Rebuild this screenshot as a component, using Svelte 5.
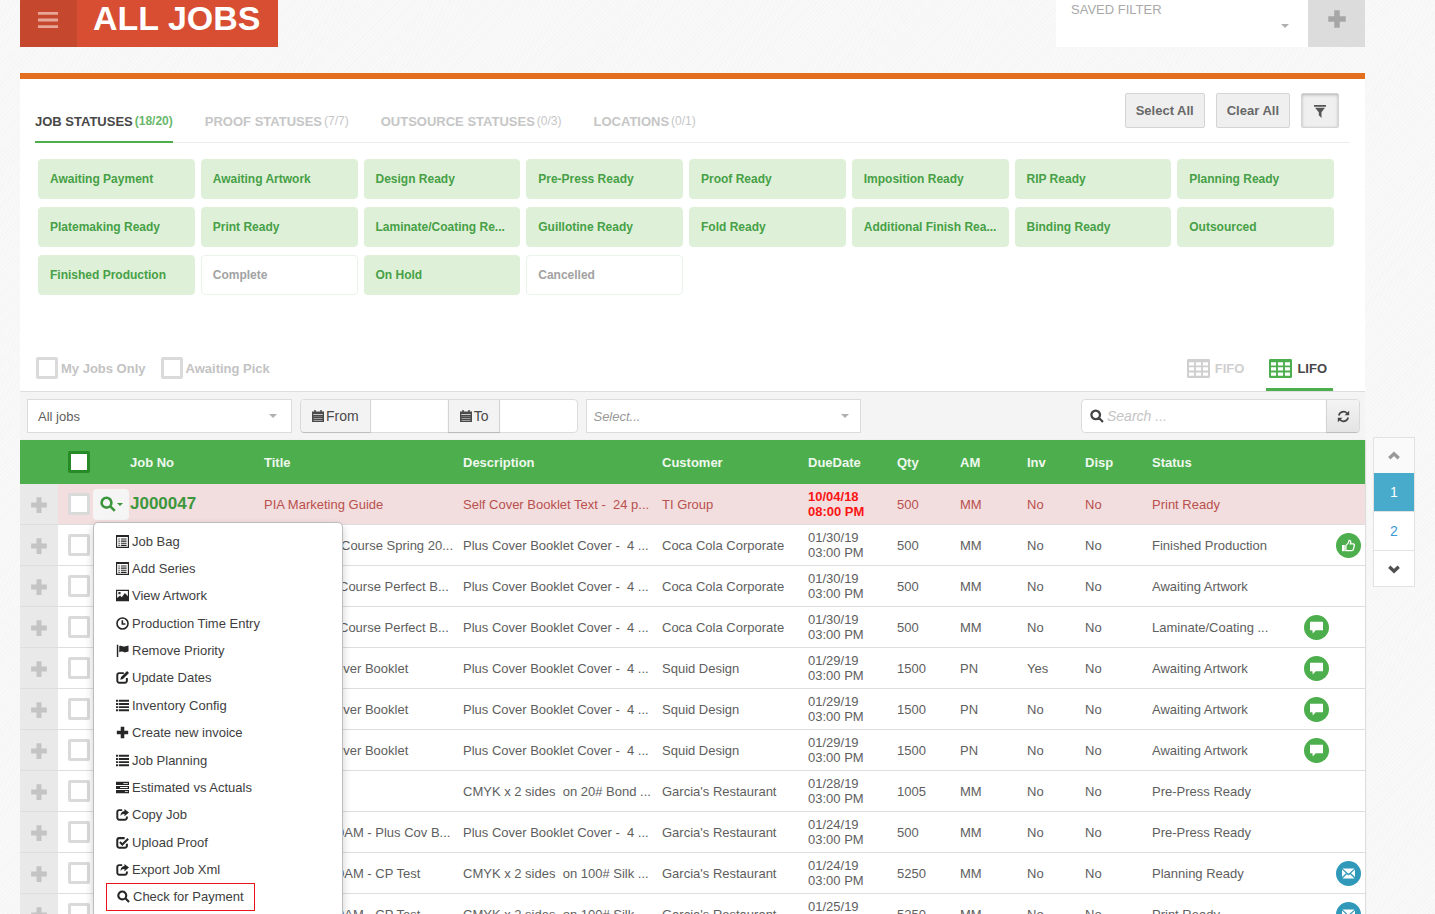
<script>
  const icons = {
    menu: { d: 'M0 0h16v2.8H0zM0 6.6h16v2.8H0zM0 13.2h16v2.8H0z' },
    plus: { d: 'M5.8 1h4.4v4.8H15v4.4h-4.8V15H5.8v-4.8H1V5.8h4.8z' },
    filter: { d: 'M0 0h16v2.2H0zM1.4 3.4h13.2L10 9v7L6.4 12.6V9z' },
    calendar: {
      d: 'M3 0h2v2h6V0h2v2h3v14H0V2h3zM1.6 5.4v.8h12.8v-.8zM2 8.2v.6h12v-.6zM2 10.8v.6h12v-.6zM2 13.4v.6h12v-.6z',
    },
    search: { s: 'M11.4 6.7a4.9 4.9 0 1 1-9.8 0a4.9 4.9 0 1 1 9.8 0zM10.3 10.3L14.8 14.8', w: 2.6 },
    refresh: {
      d: 'M15 1v5.6H9.4zM1 15V9.4h5.6z',
      s: 'M2.2 6.8A6 6 0 0 1 12.6 4.2M13.8 9.2A6 6 0 0 1 3.4 11.8',
      w: 2,
    },
    table: {
      d: 'M1 0H15q1 0 1 1V15q0 1-1 1H1q-1 0-1-1V1Q0 0 1 0zM1.4 2.8v2.6h3.5V2.8zM6.2 2.8v2.6h3.6V2.8zM11.1 2.8v2.6h3.5V2.8zM1.4 6.9v2.8h3.5V6.9zM6.2 6.9v2.8h3.6V6.9zM11.1 6.9v2.8h3.5V6.9zM1.4 11.3v2.9h3.5v-2.9zM6.2 11.3v2.9h3.6v-2.9zM11.1 11.3v2.9h3.5v-2.9z',
    },
    listAlt: {
      d: 'M0 0H16V16H0zM1.4 2.6V14.6H14.6V2.6zM3 4.2h1.6v1.4H3zM6 4.2h7v1.4H6zM3 6.8h1.6v1.4H3zM6 6.8h7v1.4H6zM3 9.4h1.6v1.4H3zM6 9.4h7v1.4H6zM3 12h1.6v1.4H3zM6 12h7v1.4H6z',
    },
    picture: { d: 'M0 1H16V15H0zM1.4 2.4V11L5 8l2 2 4-5.2L14.6 9V2.4zM3 3.8h2.6v2.6H3z' },
    clock: { s: 'M14.8 8a6.8 6.8 0 1 1-13.6 0a6.8 6.8 0 1 1 13.6 0zM7.8 4V8.6H11.6', w: 2 },
    flag: {
      d: 'M1 1h1.8v15H1zM4 2.6c2.4-1.6 4.4.8 6.8.4 1.6-.2 3-.8 4.6-1.2v7.4c-3 1.2-4.4 1.2-6.2.6-2-.8-3.4-.6-5.2.4z',
    },
    edit: { d: 'M13.6 0l2.4 2.4-7.4 7.4-3.4 1 1-3.4z', s: 'M9.6 2.6H4A2.4 2.4 0 0 0 1.6 5v7A2.4 2.4 0 0 0 4 14.4h7A2.4 2.4 0 0 0 13.4 12V8.6', w: 2.4 },
    list: {
      d: 'M0 1h2.4v2.4H0zM3.4 1H16v2.4H3.4zM0 4.9h2.4v2.4H0zM3.4 4.9H16v2.4H3.4zM0 8.8h2.4v2.4H0zM3.4 8.8H16v2.4H3.4zM0 12.7h2.4v2.4H0zM3.4 12.7H16v2.4H3.4z',
    },
    tasks: {
      d: 'M0 1h16v3.8H0zM9 2.4v1h5.6v-1zM0 6.1h16v3.8H0zM5 7.5v1h9.6v-1zM0 11.2h16V15H0zM11 12.6v1h3.6v-1z',
    },
    share: {
      d: 'M10.4 1.2L16 5.6 10.4 10V7.4C8 7.2 6.6 8.2 5.6 10.2 5.4 6.4 7.4 4 10.4 3.8z',
      s: 'M7.6 2.6H4A2.4 2.4 0 0 0 1.6 5v7A2.4 2.4 0 0 0 4 14.4h7A2.4 2.4 0 0 0 13.4 12v-1.6',
      w: 2.4,
    },
    check: {
      s: 'M10.6 2.6H4A2.4 2.4 0 0 0 1.6 5v7A2.4 2.4 0 0 0 4 14.4h7A2.4 2.4 0 0 0 13.4 12V9.4M4.8 7.4l3 3L15 3.4',
      w: 2.5,
    },
    up: { s: 'M2.6 10.6L8 5.4l5.4 5.2', w: 3.8 },
    down: { s: 'M2.6 5.4L8 10.6l5.4-5.2', w: 3.8 },
    thumb: {
      d: 'M0 7.4h3.4V15H0z',
      s: 'M4.8 8C7 6.4 8.6 4.8 8.8 1.6c2.2-.2 2.4 2 1.4 4.4h3.8q1.4.2 1.2 1.8l-1.2 5q-.4 1.4-1.8 1.4H4.8z',
      w: 1.6,
    },
    comment: { d: 'M0 1h16v10.4H7L3.4 15.4 3 11.4H0z' },
    mail: {
      d: 'M.6 1.8H15.4L8 8.4zM0 3.2L4.9 7.6 0 12.2zM16 3.2V12.2L11.1 7.6zM.6 14.2L6 8.8 8 10.4 10 8.8 15.4 14.2z',
    },
  };

  const tabs = [
    { name: 'JOB STATUSES', count: '(18/20)' },
    { name: 'PROOF STATUSES', count: '(7/7)' },
    { name: 'OUTSOURCE STATUSES', count: '(0/3)' },
    { name: 'LOCATIONS', count: '(0/1)' },
  ];
  let activeTab = $state('JOB STATUSES');

  let statuses = $state(
    [
      'Awaiting Payment', 'Awaiting Artwork', 'Design Ready', 'Pre-Press Ready',
      'Proof Ready', 'Imposition Ready', 'RIP Ready', 'Planning Ready',
      'Platemaking Ready', 'Print Ready', 'Laminate/Coating Re...', 'Guillotine Ready',
      'Fold Ready', 'Additional Finish Rea...', 'Binding Ready', 'Outsourced',
      'Finished Production', 'Complete', 'On Hold', 'Cancelled',
    ].map((name) => ({ name, on: name !== 'Complete' && name !== 'Cancelled' }))
  );

  function setAll(on) {
    statuses.forEach((s) => (s.on = on));
  }

  let order = $state('LIFO');
  let menuOpen = $state(true);

  const columns = [
    ['', 38], ['', 72], ['Job No', 134], ['Title', 199], ['Description', 199],
    ['Customer', 146], ['DueDate', 89], ['Qty', 63], ['AM', 67], ['Inv', 58],
    ['Disp', 67], ['Status', 152], ['', 32], ['', 29],
  ];

  const plusCover = 'Plus Cover Booklet Cover -\u00a0 4 ...';

  // indent: how far the title starts behind the open menu
  const jobs = [
    { no: 'J000047', title: 'PIA Marketing Guide', desc: 'Self Cover Booklet Text -\u00a0 24 p...', customer: 'TI Group', date: '10/04/18', time: '08:00 PM', qty: 500, am: 'MM', inv: 'No', disp: 'No', status: 'Print Ready', late: true },
    { title: 'Course Spring 20...', indent: 77, desc: plusCover, customer: 'Coca Cola Corporate', date: '01/30/19', time: '03:00 PM', qty: 500, am: 'MM', inv: 'No', disp: 'No', status: 'Finished Production', badge: 'thumb' },
    { title: 'Course Perfect B...', indent: 75, desc: plusCover, customer: 'Coca Cola Corporate', date: '01/30/19', time: '03:00 PM', qty: 500, am: 'MM', inv: 'No', disp: 'No', status: 'Awaiting Artwork' },
    { title: 'Course Perfect B...', indent: 75, desc: plusCover, customer: 'Coca Cola Corporate', date: '01/30/19', time: '03:00 PM', qty: 500, am: 'MM', inv: 'No', disp: 'No', status: 'Laminate/Coating ...', note: true },
    { title: 'over Booklet', indent: 72, desc: plusCover, customer: 'Squid Design', date: '01/29/19', time: '03:00 PM', qty: 1500, am: 'PN', inv: 'Yes', disp: 'No', status: 'Awaiting Artwork', note: true },
    { title: 'over Booklet', indent: 72, desc: plusCover, customer: 'Squid Design', date: '01/29/19', time: '03:00 PM', qty: 1500, am: 'PN', inv: 'No', disp: 'No', status: 'Awaiting Artwork', note: true },
    { title: 'over Booklet', indent: 72, desc: plusCover, customer: 'Squid Design', date: '01/29/19', time: '03:00 PM', qty: 1500, am: 'PN', inv: 'No', disp: 'No', status: 'Awaiting Artwork', note: true },
    { title: '', desc: 'CMYK x 2 sides\u00a0 on 20# Bond ...', customer: "Garcia's Restaurant", date: '01/28/19', time: '03:00 PM', qty: 1005, am: 'MM', inv: 'No', disp: 'No', status: 'Pre-Press Ready' },
    { title: '0AM - Plus Cov B...', indent: 73, desc: plusCover, customer: "Garcia's Restaurant", date: '01/24/19', time: '03:00 PM', qty: 500, am: 'MM', inv: 'No', disp: 'No', status: 'Pre-Press Ready' },
    { title: '0AM - CP Test', indent: 73, desc: 'CMYK x 2 sides\u00a0 on 100# Silk ...', customer: "Garcia's Restaurant", date: '01/24/19', time: '03:00 PM', qty: 5250, am: 'MM', inv: 'No', disp: 'No', status: 'Planning Ready', badge: 'mail' },
    { title: '0AM - CP Test', indent: 73, desc: 'CMYK x 2 sides\u00a0 on 100# Silk ...', customer: "Garcia's Restaurant", date: '01/25/19', time: '03:00 PM', qty: 5250, am: 'MM', inv: 'No', disp: 'No', status: 'Print Ready', badge: 'mail' },
  ];

  const actions = [
    ['listAlt', 'Job Bag'],
    ['listAlt', 'Add Series'],
    ['picture', 'View Artwork'],
    ['clock', 'Production Time Entry'],
    ['flag', 'Remove Priority'],
    ['edit', 'Update Dates'],
    ['list', 'Inventory Config'],
    ['plus', 'Create new invoice'],
    ['list', 'Job Planning'],
    ['tasks', 'Estimated vs Actuals'],
    ['share', 'Copy Job'],
    ['check', 'Upload Proof'],
    ['share', 'Export Job Xml'],
    ['search', 'Check for Payment'],
  ];
</script>

{#snippet icon(name, width = 13, height = width)}
  <svg class="icon" viewBox="0 0 16 16" {width} {height} preserveAspectRatio="none" aria-hidden="true">
    {#if icons[name].d}
      <path d={icons[name].d} fill="currentColor" fill-rule="evenodd" />
    {/if}
    {#if icons[name].s}
      <path d={icons[name].s} fill="none" stroke="currentColor" stroke-width={icons[name].w} />
    {/if}
  </svg>
{/snippet}

<div class="page">
  <header class="topbar">
    <div class="brand">
      <button class="brand__menu" aria-label="Menu">{@render icon('menu', 20, 16)}</button>
      <h1>ALL JOBS</h1>
    </div>
    <div class="saved">
      <button class="saved__select">SAVED FILTER <span class="caret"></span></button>
      <button class="saved__add" aria-label="Add filter">{@render icon('plus', 20)}</button>
    </div>
  </header>

  <section class="panel">
    <div class="filters">
      <div class="tabs">
        <nav>
          {#each tabs as tab}
            <button class="tab" class:tab--active={tab.name === activeTab} onclick={() => (activeTab = tab.name)}>
              {tab.name}<small>{tab.count}</small>
            </button>
          {/each}
        </nav>
        <div class="tabs__actions">
          <button class="btn" onclick={() => setAll(true)}>Select All</button>
          <button class="btn" onclick={() => setAll(false)}>Clear All</button>
          <button class="btn btn--pressed" aria-label="Filter">{@render icon('filter', 12, 13)}</button>
        </div>
      </div>

      <div class="chips">
        {#each statuses as status}
          <button class="chip" class:chip--on={status.on} onclick={() => (status.on = !status.on)}>{status.name}</button>
        {/each}
      </div>

      <div class="options">
        <label class="option"><input type="checkbox" class="box" />My Jobs Only</label>
        <label class="option"><input type="checkbox" class="box" />Awaiting Pick</label>
        <div class="order">
          {#each ['FIFO', 'LIFO'] as name}
            <button class="order__tab" class:order__tab--active={name === order} onclick={() => (order = name)}>
              {@render icon('table', 23, 19)}{name}
            </button>
          {/each}
        </div>
      </div>
    </div>

    <div class="toolbar">
      <div class="select select--view">
        <select aria-label="View"><option>All jobs</option></select>
        <span class="caret"></span>
      </div>
      <div class="range">
        <label class="range__label" for="from">{@render icon('calendar', 12)}From</label>
        <input id="from" type="text" />
        <label class="range__label" for="to">{@render icon('calendar', 12)}To</label>
        <input id="to" type="text" />
      </div>
      <div class="select select--pick">
        <select aria-label="Select"><option>Select...</option></select>
        <span class="caret"></span>
      </div>
      <div class="search">
        <label for="search" aria-label="Search">{@render icon('search', 14)}</label>
        <input id="search" type="text" placeholder="Search ..." />
        <button aria-label="Refresh">{@render icon('refresh', 13)}</button>
      </div>
    </div>
  </section>

  <table>
    <colgroup>
      {#each columns as [, width]}
        <col style="width: {width}px" />
      {/each}
    </colgroup>
    <thead>
      <tr>
        {#each columns as [name], i}
          <th class:pick={i === 1}>
            {#if i === 1}
              <input type="checkbox" class="box box--green" aria-label="Select all jobs" />
            {:else}
              {name}
            {/if}
          </th>
        {/each}
      </tr>
    </thead>
    <tbody>
      {#each jobs as job}
        <tr class:late={job.late}>
          <td class="expand"><button aria-label="Expand">{@render icon('plus', 18)}</button></td>
          <td class="pick">
            <div class="pick__tools">
              <input type="checkbox" class="box" aria-label="Select job" />
              {#if job.late}
                <div class="actions">
                  <button class="actions__toggle" aria-label="Job actions" onclick={() => (menuOpen = !menuOpen)}>
                    {@render icon('search', 16)}<span class="caret"></span>
                  </button>
                  {#if menuOpen}
                    <ul class="menu">
                      {#each actions as [glyph, label], i}
                        <li>
                          <button class:marked={i === actions.length - 1}>{@render icon(glyph)}{label}</button>
                        </li>
                      {/each}
                    </ul>
                  {/if}
                </div>
              {/if}
            </div>
          </td>
          <td class="number">{#if job.no}<a href="#job">{job.no}</a>{/if}</td>
          <td style="padding-left: {job.indent ?? 0}px">{job.title}</td>
          <td>{job.desc}</td>
          <td>{job.customer}</td>
          <td class="due">{job.date}<br />{job.time}</td>
          <td>{job.qty}</td>
          <td>{job.am}</td>
          <td>{job.inv}</td>
          <td>{job.disp}</td>
          <td>{job.status}</td>
          <td>{#if job.note}<span class="badge">{@render icon('comment', 13)}</span>{/if}</td>
          <td>
            {#if job.badge}
              <span class="badge" class:badge--blue={job.badge === 'mail'}>{@render icon(job.badge, 13)}</span>
            {/if}
          </td>
        </tr>
      {/each}
    </tbody>
  </table>

  <nav class="pager" aria-label="Pages">
    <button class="pager__up" aria-label="Previous page">{@render icon('up', 14)}</button>
    <button class="pager__page pager__page--active">1</button>
    <button class="pager__page">2</button>
    <button aria-label="Next page">{@render icon('down', 14)}</button>
  </nav>
</div>

<style>
  :global(body) {
    margin: 0;
    overflow: hidden;
  }

  .page {
    display: grid;
    grid-template-columns: minmax(0, 1fr) 42px;
    grid-template-rows: auto auto auto;
    align-content: start;
    column-gap: 8px;
    box-sizing: border-box;
    height: 100vh;
    overflow: hidden;
    padding: 0 20px;
    background:
      repeating-linear-gradient(135deg, rgba(0, 0, 0, 0.01) 0 1px, transparent 1px 3px),
      repeating-linear-gradient(115deg, rgba(0, 0, 0, 0.008) 0 1px, transparent 1px 4px),
      #f9f9f9;
    color: #5e5e5e;
    font: 13px/15px 'Liberation Sans', Arial, sans-serif;
  }

  button,
  input,
  select {
    box-sizing: border-box;
    margin: 0;
    padding: 0;
    border: 0;
    background: none;
    color: inherit;
    font: inherit;
  }

  button {
    cursor: pointer;
  }

  .icon {
    display: block;
    flex: none;
  }

  .caret {
    border: 4px solid transparent;
    border-top-color: #b0b0b0;
    border-bottom: 0;
    pointer-events: none;
  }

  .topbar {
    display: flex;
    justify-content: space-between;
    height: 47px;
    margin-bottom: 26px;
  }

  .brand {
    display: flex;
    padding-right: 17px;
    background: #d74e33;
  }

  .brand__menu {
    display: flex;
    align-items: center;
    justify-content: center;
    width: 57px;
    padding: 0 2px 8px 0;
    margin-right: 16px;
    background: #c5472e;
    color: #e7a698;
  }

  h1 {
    margin: 0;
    color: #fff;
    font-size: 34px;
    line-height: 36px;
  }

  .saved {
    display: flex;
  }

  .saved__select {
    display: flex;
    justify-content: space-between;
    align-items: flex-start;
    width: 252px;
    padding: 2px 19px 0 15px;
    background: #fff;
    color: #a9a9a9;
  }

  .saved__select .caret {
    margin-top: 22px;
  }

  .saved__add {
    display: flex;
    align-items: center;
    justify-content: center;
    width: 57px;
    padding-bottom: 10px;
    background: #dcdcdc;
    color: #a6a6a6;
  }

  .panel {
    grid-column: 1;
    border-top: 6px solid #e36f1e;
    background: #fff;
  }

  .tabs {
    display: flex;
    justify-content: space-between;
    margin: 0 15px;
    border-bottom: 1px solid #ececec;
  }

  .tabs nav {
    display: flex;
    gap: 32px;
  }

  .tab {
    display: flex;
    align-items: center;
    gap: 2px;
    height: 64px;
    margin-bottom: -1px;
    padding-top: 22px;
    border-bottom: 2px solid transparent;
    color: #c6c6c6;
    font-weight: bold;
  }

  .tab small {
    font-size: 12px;
    font-weight: normal;
  }

  .tab--active {
    border-color: #4cae4c;
    color: #484848;
  }

  .tab--active small {
    color: #6ab86a;
    font-weight: bold;
  }

  .tabs__actions {
    display: flex;
    align-items: flex-start;
    gap: 11px;
    padding: 14px 11px 0 0;
  }

  .btn {
    display: flex;
    align-items: center;
    height: 35px;
    padding: 0 10px;
    border: 1px solid #d4d4d4;
    border-radius: 2px;
    background: #efefef;
    color: #686868;
    font-weight: bold;
  }

  .btn--pressed {
    padding: 2px 12px 0;
    box-shadow: inset 0 1px 3px rgba(0, 0, 0, 0.25);
    color: #555;
  }

  .chips {
    display: grid;
    grid-template-columns: repeat(8, minmax(0, 1fr));
    gap: 8px 6px;
    padding: 16px 31px 50px 18px;
  }

  .chip {
    height: 40px;
    padding: 0 11px;
    border: 1px solid #eaf3ea;
    border-radius: 4px;
    background: #fff;
    color: #a2a2a2;
    font-size: 12px;
    font-weight: bold;
    text-align: left;
    white-space: nowrap;
  }

  .chip--on {
    border-color: #dff0d8;
    background: #dff0d8;
    color: #46a046;
  }

  .options {
    display: flex;
    align-items: center;
    gap: 15px;
    height: 46px;
    padding: 0 32px 0 16px;
    border-bottom: 1px solid #dedede;
    color: #c3c3c3;
    font-weight: bold;
  }

  .option {
    display: flex;
    align-items: center;
    gap: 3px;
  }

  .box {
    appearance: none;
    flex: none;
    width: 22px;
    height: 22px;
    border: 3px solid #dadada;
    border-radius: 2px;
    background: #fff;
  }

  .box--green {
    border-color: #268a26;
  }

  .box:checked {
    background: #4cae4c;
    box-shadow: inset 0 0 0 3px #fff;
  }

  .order {
    display: flex;
    align-self: stretch;
    gap: 16px;
    margin-left: auto;
  }

  .order__tab {
    display: flex;
    align-items: center;
    gap: 5px;
    padding: 3px 6px 0 3px;
    border-bottom: 3px solid transparent;
    color: #cfcfcf;
    font-weight: bold;
  }

  .order__tab--active {
    border-color: #4cae4c;
    color: #484848;
  }

  .order__tab--active .icon {
    color: #4cae4c;
  }

  .toolbar {
    display: flex;
    align-items: center;
    gap: 8px;
    height: 48px;
    padding: 0 5px 0 7px;
    background: #f4f4f4;
  }

  .toolbar > div {
    box-sizing: border-box;
    height: 34px;
    border: 1px solid #dcdcdc;
    background: #fff;
  }

  .select {
    display: flex;
    align-items: center;
    padding-right: 14px;
  }

  .select select {
    flex: 1;
    appearance: none;
    height: 100%;
    padding-left: 10px;
    outline: 0;
  }

  .select--view {
    width: 265px;
  }

  .select--pick {
    width: 275px;
    padding-right: 11px;
  }

  .select--pick select {
    padding-left: 6px;
    color: #999;
    font-style: italic;
  }

  .range,
  .search {
    display: flex;
    border-radius: 4px;
    font-size: 14px;
  }

  .range input {
    width: 77px;
    padding: 0 6px;
  }

  .range__label {
    display: flex;
    align-items: center;
    gap: 2px;
    padding: 0 11px;
    border-right: 1px solid #d4d4d4;
    background: #f3f3f3;
    box-shadow: 0 1px 1px rgba(0, 0, 0, 0.15);
    color: #4a4a4a;
  }

  .range__label:first-child {
    border-radius: 3px 0 0 3px;
  }

  .range input + .range__label {
    border-left: 1px solid #d4d4d4;
  }

  .search {
    width: 279px;
    margin-left: auto;
  }

  .search label {
    display: flex;
    align-items: center;
    padding: 0 3px 0 8px;
    color: #444;
  }

  .search input {
    flex: 1;
    min-width: 0;
    outline: 0;
  }

  .search input::placeholder {
    color: #c4c4c4;
    font-style: italic;
  }

  .search button {
    display: flex;
    align-items: center;
    justify-content: center;
    width: 33px;
    border-left: 1px solid #d4d4d4;
    border-radius: 0 3px 3px 0;
    background: linear-gradient(#f4f4f4, #e4e4e4);
    box-shadow: 0 1px 1px rgba(0, 0, 0, 0.15);
    color: #444;
  }

  table {
    grid-column: 1;
    align-self: start;
    width: 100%;
    table-layout: fixed;
    border-collapse: separate;
    border-spacing: 0;
    background: #fff;
    box-shadow: 1px 0 1px rgba(0, 0, 0, 0.1);
  }

  th,
  td {
    padding: 0;
    text-align: left;
    white-space: nowrap;
  }

  th {
    height: 44px;
    background: #4dae4d;
    color: #eef8ee;
  }

  td {
    height: 40px;
    border-bottom: 1px solid #dedede;
  }

  .pick {
    padding-left: 10px;
  }

  .pick .box {
    display: block;
  }

  .pick__tools {
    display: flex;
    align-items: center;
    gap: 3px;
  }

  .expand {
    background: #e9e9e9;
  }

  .expand button {
    display: flex;
    justify-content: center;
    width: 100%;
    padding-top: 2px;
    color: #c4c4c4;
  }

  .late td:not(.expand) {
    background: #f2dede;
    color: #b9504e;
  }

  .number a {
    color: #3c963c;
    font-size: 17px;
    font-weight: bold;
    text-decoration: none;
  }

  .late td.due:not(.expand) {
    color: #fb1414;
    font-weight: bold;
  }

  .actions {
    position: relative;
  }

  .actions__toggle {
    display: flex;
    align-items: center;
    justify-content: center;
    gap: 1px;
    width: 36px;
    height: 31px;
    border-radius: 4px;
    background: #f5f5f5;
    color: #3c963c;
  }

  .actions__toggle .caret {
    border-width: 3px;
    border-bottom: 0;
    border-top-color: #3c963c;
  }

  .menu {
    position: absolute;
    top: 33px;
    left: 0;
    z-index: 1;
    display: grid;
    grid-auto-rows: 1fr;
    box-sizing: border-box;
    width: 250px;
    height: 396px;
    margin: 0;
    padding: 5px 12px 6px;
    border: 1px solid #bdbdbd;
    border-radius: 5px;
    background: #fff;
    box-shadow: 0 4px 8px rgba(0, 0, 0, 0.2);
    color: #3e3e3e;
    list-style: none;
  }

  .menu li {
    display: flex;
  }

  .menu button {
    display: flex;
    align-items: center;
    gap: 3px;
    padding: 0 10px;
  }

  .menu .icon {
    color: #262626;
  }

  .menu .marked {
    border: 1px solid #e8151c;
  }

  .badge {
    display: flex;
    align-items: center;
    justify-content: center;
    width: 25px;
    height: 25px;
    border-radius: 50%;
    background: #4cae4c;
    color: #fff;
  }

  .badge--blue {
    background: #3099b9;
  }

  .pager {
    grid-column: 2;
    display: flex;
    flex-direction: column;
    align-self: start;
    box-sizing: border-box;
    margin-top: -3px;
    border: 1px solid #e2e2e2;
    background: #fff;
    color: #505050;
  }

  .pager button {
    display: flex;
    align-items: center;
    justify-content: center;
    height: 35px;
  }

  .pager .pager__up {
    background: #fafafa;
    color: #999;
  }

  .pager .pager__page {
    height: 39px;
    border-bottom: 1px solid #e2e2e2;
    color: #3a9bd8;
    font-size: 14px;
  }

  .pager .pager__page--active {
    background: #48abcc;
    color: #fff;
  }
</style>
